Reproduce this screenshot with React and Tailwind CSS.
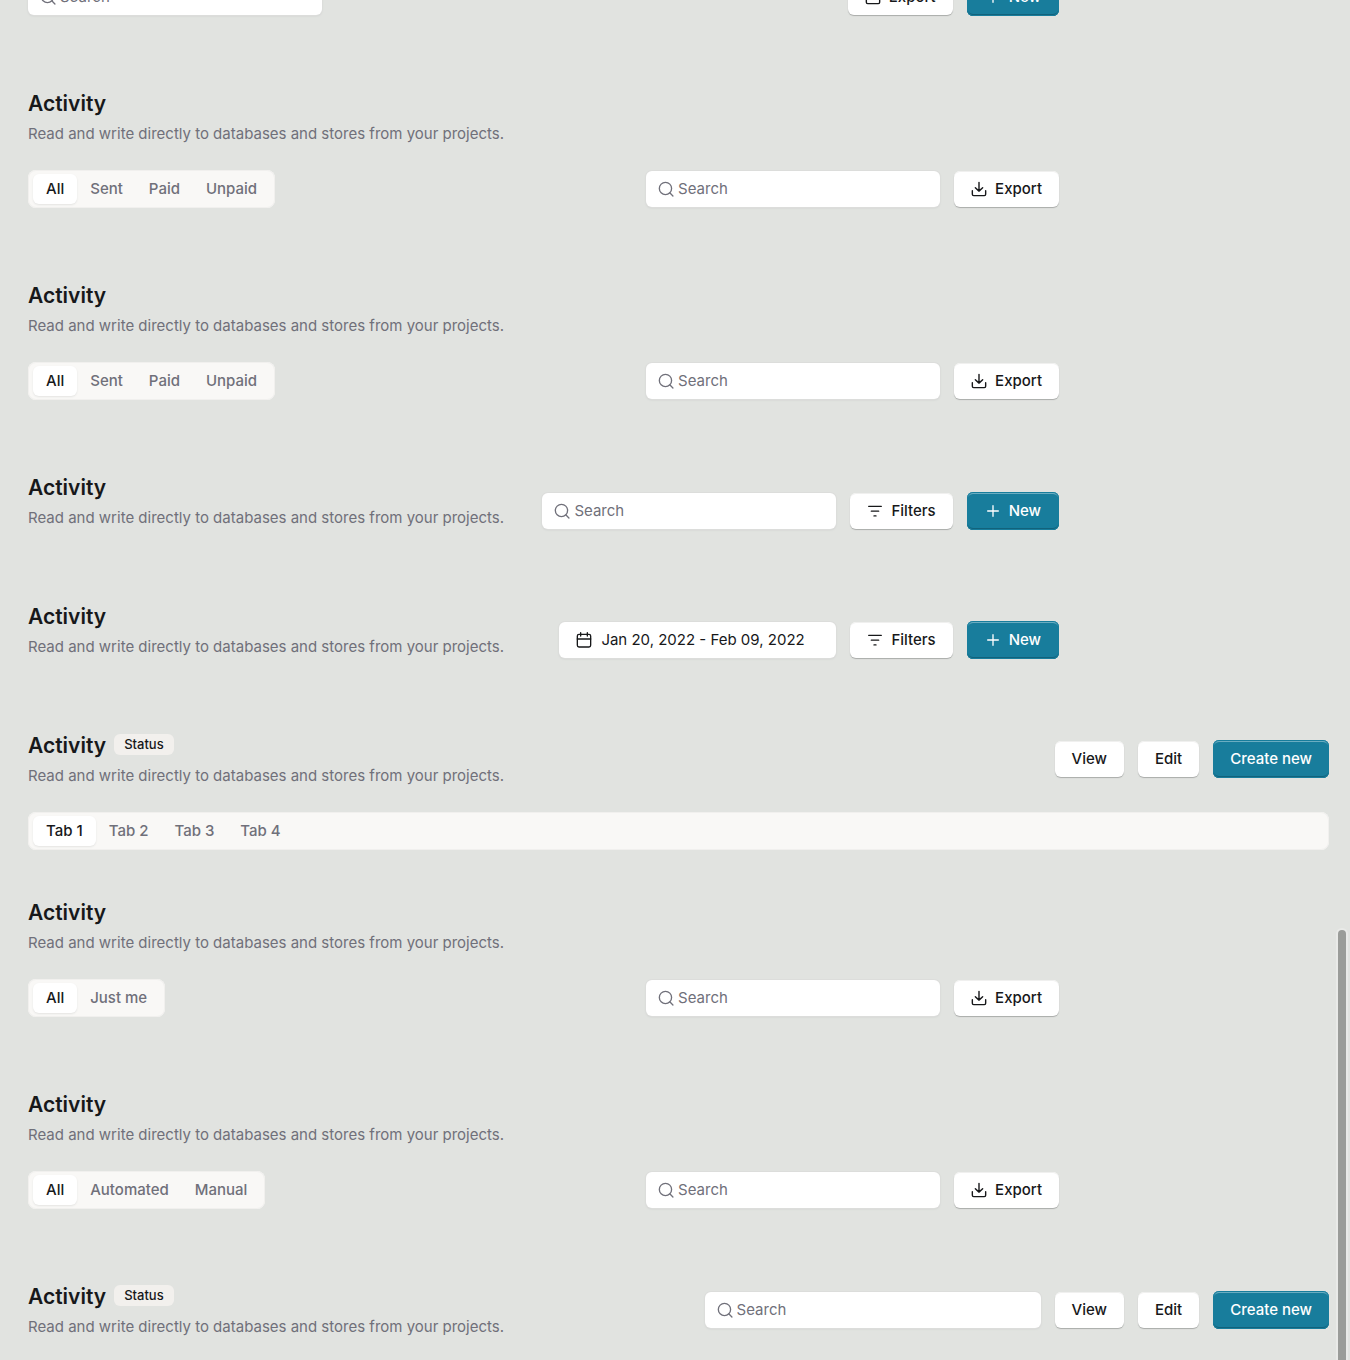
import React, { useId } from "react";

const iconProps = {
  viewBox: "0 0 24 24",
  fill: "none",
  stroke: "currentColor",
  strokeLinecap: "round",
  strokeLinejoin: "round",
  "aria-hidden": true,
};

function SearchIcon() {
  return (
    <svg {...iconProps} strokeWidth="2" className="size-4 shrink-0 text-[#70707a]">
      <circle cx="11.2" cy="11.2" r="9.2" />
      <path d="M18 18 22.4 22.4" />
    </svg>
  );
}

function ExportIcon() {
  return (
    <svg {...iconProps} strokeWidth="2.1" className="size-4 shrink-0">
      <path d="M12 2v13M6.5 10 12 15.2 17.5 10" />
      <path d="M2 14.5V20q0 2 2 2h16q2 0 2-2v-5.5" />
    </svg>
  );
}

function FilterIcon() {
  return (
    <svg {...iconProps} strokeWidth="2" className="size-4 shrink-0">
      <path d="M2.5 5h19M6.5 12.2h11M10.5 19.4h3" />
    </svg>
  );
}

function PlusIcon() {
  return (
    <svg {...iconProps} strokeWidth="2" className="size-4 shrink-0">
      <path d="M12 4v16M4 12h16" />
    </svg>
  );
}

function CalendarIcon() {
  return (
    <svg {...iconProps} strokeWidth="2" className="size-4 shrink-0">
      <rect x="2" y="3.5" width="20" height="19" rx="2.5" />
      <path d="M2 10.5h20M7 1v5M17 1v5" />
    </svg>
  );
}

function Button({ icon, children, primary }) {
  const look = primary
    ? "h-[38px] bg-[#187d9c] text-white shadow-[inset_0_0_0_1px_#187d9c,inset_0_2px_0_#6badc1,inset_0_-2px_0_#12627b]"
    : "my-px h-9 bg-white text-[#17181a] shadow-[inset_0_1px_0_#f0f0ef,0_1px_1px_#a9aba9]";
  return (
    <button
      type="button"
      className={
        "flex shrink-0 items-center justify-center gap-2 rounded-md text-[15px] font-medium whitespace-nowrap " +
        (primary && icon ? "px-[18px] " : "px-[17px] ") +
        look
      }
    >
      {icon}
      {children}
    </button>
  );
}

function Search({ wide }) {
  const id = useId();
  return (
    <label
      htmlFor={id}
      className={
        "flex h-9 shrink-0 items-center gap-1 rounded-md bg-white px-3 shadow-[0_0_0_1px_#dcdddb,0_1px_2px_#c8cac8] " +
        (wide ? "w-[336px]" : "w-[294px]")
      }
    >
      <SearchIcon />
      <input
        id={id}
        type="text"
        aria-label="Search"
        placeholder="Search"
        className="w-full min-w-0 bg-transparent text-[15px] text-[#17181a] outline-none placeholder:text-[#70707a]"
      />
    </label>
  );
}

function DateRange() {
  return (
    <button
      type="button"
      className="flex h-9 w-[277px] shrink-0 items-center gap-[9px] rounded-md bg-white px-[17px] text-[15px] whitespace-nowrap text-[#17181a] shadow-[0_0_0_1px_#dcdddb,0_1px_2px_#c8cac8]"
    >
      <CalendarIcon />
      Jan 20, 2022 - Feb 09, 2022
    </button>
  );
}

function Tabs({ items }) {
  return (
    <div
      role="tablist"
      className="flex h-[38px] rounded-lg bg-[#f9f8f6] px-[5px] py-1 shadow-[inset_0_0_0_1px_#f1f0ee]"
    >
      {items.map((item, i) => (
        <button
          key={item}
          type="button"
          role="tab"
          aria-selected={i === 0}
          className={
            "rounded-md px-[13px] text-[15px] font-medium whitespace-nowrap " +
            (i === 0 ? "bg-white text-[#17181a] shadow-[0_1px_2px_#e4e4e2]" : "text-[#70707a]")
          }
        >
          {item}
        </button>
      ))}
    </div>
  );
}

function Heading({ status }) {
  return (
    <div className="min-w-0">
      <div className="flex h-8 items-start gap-2">
        <h2 className="text-[21px] leading-8 font-semibold text-[#17181a]">Activity</h2>
        {status && (
          <span className="mt-1 rounded-md bg-[#f2f0ed] px-[10px] text-[13px] leading-[21px] font-medium text-[#17181a]">
            Status
          </span>
        )}
      </div>
      <p className="mt-0.5 text-[15px] leading-6 text-[#70707a]">
        Read and write directly to databases and stores from your projects.
      </p>
    </div>
  );
}

function Actions({ children }) {
  return <div className="flex items-center gap-[14px]">{children}</div>;
}

function TabbedSection({ tabs }) {
  return (
    <section className="mb-[72px] max-w-[1031px]">
      <Heading />
      <div className="mt-6 flex items-center justify-between">
        <Tabs items={tabs} />
        <Actions>
          <Search />
          <Button icon={<ExportIcon />}>Export</Button>
        </Actions>
      </div>
    </section>
  );
}

function InlineSection({ children }) {
  return (
    <section className="mb-[71px] flex max-w-[1031px] items-end justify-between">
      <Heading />
      <Actions>
        {children}
        <Button icon={<FilterIcon />}>Filters</Button>
        <Button primary icon={<PlusIcon />}>New</Button>
      </Actions>
    </section>
  );
}

function RecordActions() {
  return (
    <>
      <Button>View</Button>
      <Button>Edit</Button>
      <Button primary>Create new</Button>
    </>
  );
}

export default function App() {
  return (
    <main className="relative h-screen overflow-hidden bg-[#e1e3e0] pr-[21px] pl-7 font-['Inter',sans-serif]">
      <div className="-mt-[22px] mb-[72px] flex max-w-[1031px] items-center justify-between">
        <Search />
        <Actions>
          <Button icon={<ExportIcon />}>Export</Button>
          <Button primary icon={<PlusIcon />}>New</Button>
        </Actions>
      </div>

      <TabbedSection tabs={["All", "Sent", "Paid", "Unpaid"]} />
      <TabbedSection tabs={["All", "Sent", "Paid", "Unpaid"]} />

      <InlineSection>
        <Search />
      </InlineSection>
      <InlineSection>
        <DateRange />
      </InlineSection>

      <section className="mb-[47px]">
        <div className="mb-6 flex items-center justify-between">
          <Heading status />
          <Actions>
            <RecordActions />
          </Actions>
        </div>
        <Tabs items={["Tab 1", "Tab 2", "Tab 3", "Tab 4"]} />
      </section>

      <TabbedSection tabs={["All", "Just me"]} />
      <TabbedSection tabs={["All", "Automated", "Manual"]} />

      <section className="flex items-center justify-between">
        <Heading status />
        <Actions>
          <Search wide />
          <RecordActions />
        </Actions>
      </section>

      <div className="absolute top-[930px] right-1 -bottom-4 w-2 rounded-full bg-[#9a9c99] shadow-[0_0_0_2px_#e9eae8]" />
    </main>
  );
}
